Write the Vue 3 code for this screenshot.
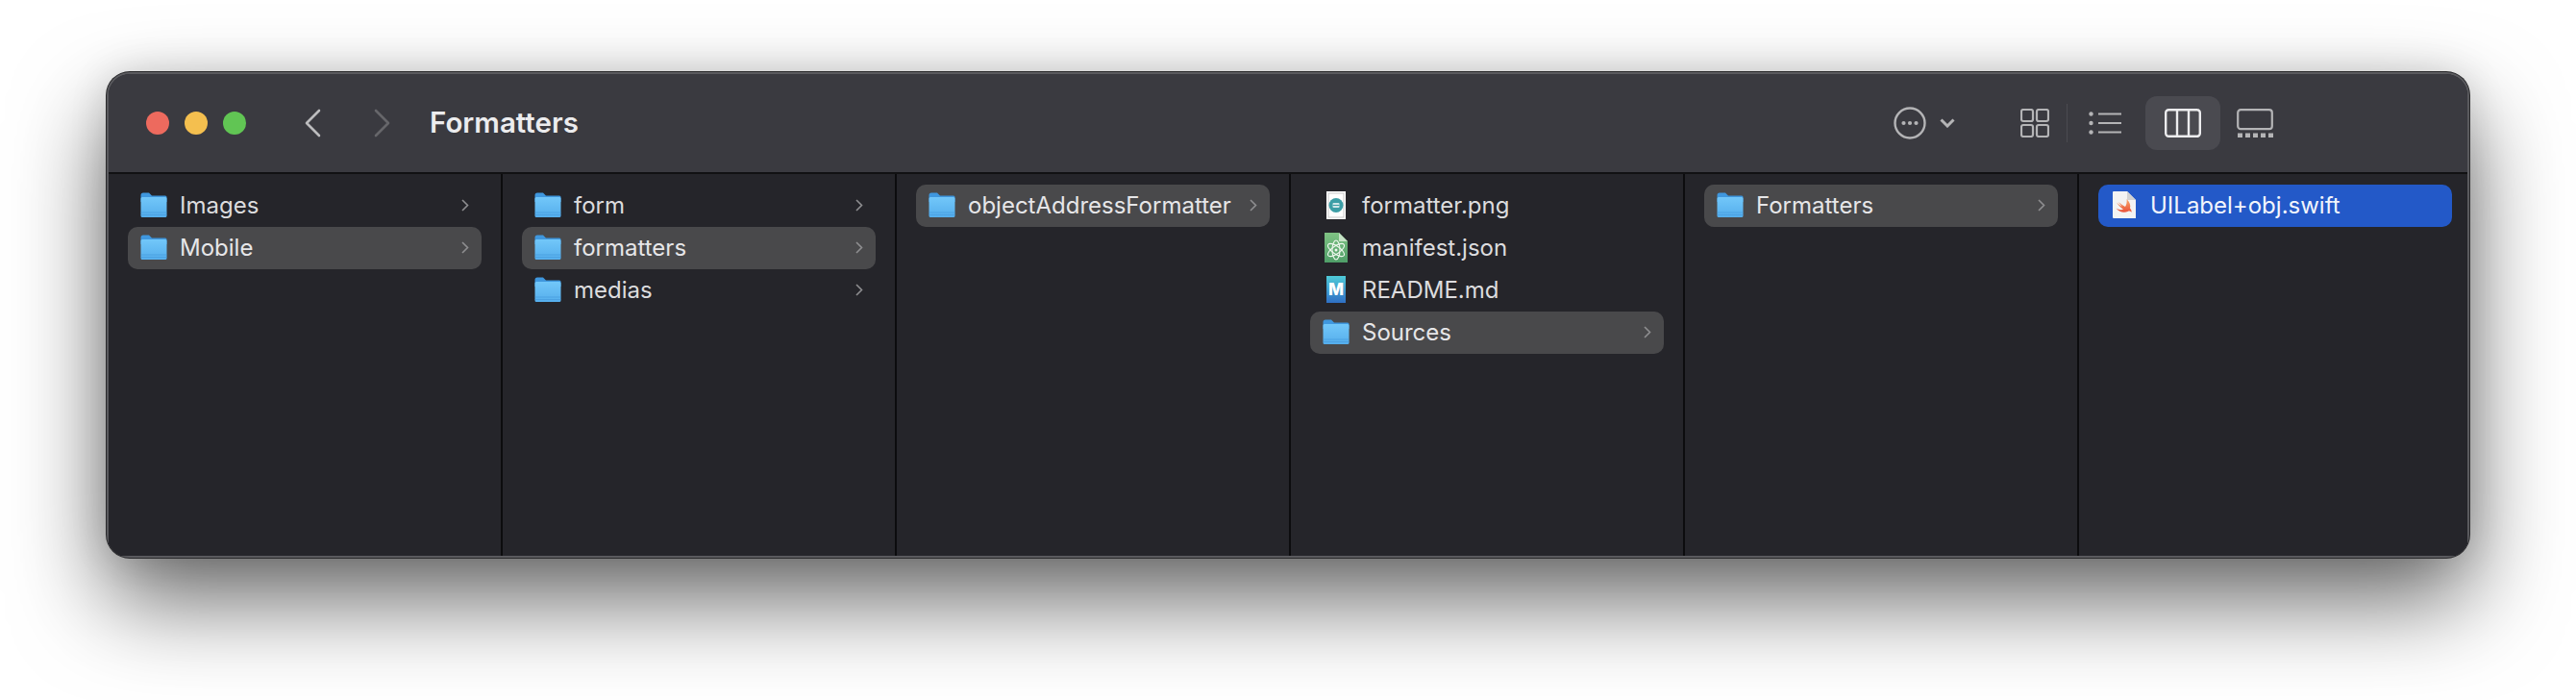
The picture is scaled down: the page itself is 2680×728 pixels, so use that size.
<script setup>
// Finder column view: each column lists its rows, row.kind picks the icon
const columns = [
  [
    { name: 'Images', kind: 'folder', arrow: true },
    { name: 'Mobile', kind: 'folder', arrow: true, state: 'open' }
  ],
  [
    { name: 'form', kind: 'folder', arrow: true },
    { name: 'formatters', kind: 'folder', arrow: true, state: 'open' },
    { name: 'medias', kind: 'folder', arrow: true }
  ],
  [{ name: 'objectAddressFormatter', kind: 'folder', arrow: true, state: 'open' }],
  [
    { name: 'formatter.png', kind: 'png' },
    { name: 'manifest.json', kind: 'json' },
    { name: 'README.md', kind: 'md' },
    { name: 'Sources', kind: 'folder', arrow: true, state: 'open' }
  ],
  [{ name: 'Formatters', kind: 'folder', arrow: true, state: 'open' }],
  [{ name: 'UILabel+obj.swift', kind: 'swift', state: 'picked' }]
]
</script>

<template>
  <div class="page">
    <div class="window">
      <header class="toolbar">
        <div class="lights">
          <span class="light red"></span>
          <span class="light yellow"></span>
          <span class="light green"></span>
        </div>
        <div class="nav">
          <svg width="18" height="30" viewBox="0 0 18 30" class="back">
            <path d="M16 2 3 15l13 13" />
          </svg>
          <svg width="18" height="30" viewBox="0 0 18 30" class="forward">
            <path d="M2 2l13 13L2 28" />
          </svg>
        </div>
        <h1 class="title">Formatters</h1>

        <div class="more">
          <svg width="34" height="34" viewBox="0 0 34 34" class="tool-icon">
            <circle cx="17" cy="17" r="15.5" />
            <circle cx="10.5" cy="17" r="2.1" class="dot" />
            <circle cx="17" cy="17" r="2.1" class="dot" />
            <circle cx="23.5" cy="17" r="2.1" class="dot" />
          </svg>
          <svg width="16" height="10" viewBox="0 0 16 10" class="tool-icon chevron">
            <path d="M1.5 1.5 8 8l6.5-6.5" />
          </svg>
        </div>

        <div class="views">
          <button class="view grid-view">
            <svg width="30" height="30" viewBox="0 0 30 30" class="tool-icon thin">
              <rect x="1" y="1" width="12" height="12" rx="2" />
              <rect x="17" y="1" width="12" height="12" rx="2" />
              <rect x="1" y="17" width="12" height="12" rx="2" />
              <rect x="17" y="17" width="12" height="12" rx="2" />
            </svg>
          </button>
          <span class="view-sep"></span>
          <button class="view list-view">
            <svg width="34" height="24" viewBox="0 0 34 24" class="tool-icon thin">
              <circle cx="2.5" cy="2.5" r="2.2" class="dot" />
              <circle cx="2.5" cy="12" r="2.2" class="dot" />
              <circle cx="2.5" cy="21.5" r="2.2" class="dot" />
              <path d="M10 2.5h24M10 12h24M10 21.5h24" />
            </svg>
          </button>
          <button class="view column-view">
            <svg width="38" height="30" viewBox="0 0 38 30" class="tool-icon active">
              <rect x="1.2" y="1.2" width="35.6" height="27.6" rx="3" />
              <path d="M13 1.2v27.6M25 1.2v27.6" />
            </svg>
          </button>
          <button class="view gallery-view">
            <svg width="38" height="30" viewBox="0 0 38 30" class="tool-icon thin">
              <rect x="1.2" y="1.2" width="35.6" height="20" rx="3" />
              <path d="M1 28h5M9 28h5M17 28h5M25 28h5M33 28h5" class="film" />
            </svg>
          </button>
        </div>
      </header>

      <main class="browser">
        <section v-for="(rows, c) in columns" :key="c" class="column">
          <div v-for="row in rows" :key="row.name" class="row" :class="row.state">
            <span class="row-icon">
              <svg v-if="row.kind === 'folder'" width="28" height="26" viewBox="0 0 28 26">
                <path d="M.5 3A2.5 2.5 0 0 1 3 .5h6l3 3h14A1.5 1.5 0 0 1 27.5 5v5H.5z" fill="#3f97de" />
                <path d="M.5 6.5A1.5 1.5 0 0 1 2 5h24a1.5 1.5 0 0 1 1.5 1.5v18A1.5 1.5 0 0 1 26 26H2a1.5 1.5 0 0 1-1.5-1.5z" fill="url(#folderFill)" />
                <path d="M.5 21h27M.5 23.5h27" stroke="#3f92d8" stroke-width="1" opacity=".5" />
                <defs>
                  <linearGradient id="folderFill" x1="0" y1="0" x2="0" y2="1">
                    <stop offset="0" stop-color="#72c7f9" />
                    <stop offset="1" stop-color="#55aeec" />
                  </linearGradient>
                </defs>
              </svg>

              <svg v-else-if="row.kind === 'png'" width="20" height="29" viewBox="0 0 20 29">
                <rect width="20" height="29" fill="#fff" />
                <rect x="2" y="2" width="16" height="25" fill="none" stroke="#c9c9c9" />
                <circle cx="10" cy="14.5" r="7.5" fill="#3c9ea6" />
                <rect x="6.5" y="12" width="7" height="5" rx="1" fill="#cfe6e8" />
                <path d="M6.5 14.5h7" stroke="#3c9ea6" />
              </svg>

              <svg v-else-if="row.kind === 'json'" width="24" height="31" viewBox="0 0 24 31">
                <path d="M0 0h15l9 9v22H0z" fill="url(#jsonFill)" />
                <path d="M15 0l9 9h-9z" fill="#c6e3c6" />
                <g fill="none" stroke="#eef7ee" stroke-width="1.1">
                  <ellipse cx="12" cy="18" rx="10" ry="4" transform="rotate(35 12 18)" />
                  <ellipse cx="12" cy="18" rx="10" ry="4" transform="rotate(-35 12 18)" />
                  <ellipse cx="12" cy="18" rx="10" ry="4" transform="rotate(90 12 18)" />
                </g>
                <circle cx="12" cy="18" r="1.5" fill="#eef7ee" />
                <defs>
                  <linearGradient id="jsonFill" x1="0" y1="0" x2="0" y2="1">
                    <stop offset="0" stop-color="#7fc283" />
                    <stop offset="1" stop-color="#4f9e68" />
                  </linearGradient>
                </defs>
              </svg>

              <span v-else-if="row.kind === 'md'" class="md-icon">M</span>

              <svg v-else-if="row.kind === 'swift'" width="24" height="28" viewBox="0 0 24 28">
                <path d="M1 0h14l9 9v19H1a1 1 0 0 1-1-1V1a1 1 0 0 1 1-1z" fill="#f3f3f3" />
                <path d="M15 0l9 9h-9z" fill="#d2d2d2" />
                <path d="M14.5 8C17.5 11 19 14.5 18 17.5 19.4 19 19.8 20.6 19.5 21.8 18.4 20.4 16.8 20.4 15.6 21 12 22.6 7 22 3.5 17.5 6 19.2 9 19.6 11 18.8 8 16.6 5.5 13.8 4 11.5 6 13.3 8 14.8 9.7 15.8 8.3 14.2 7 12.5 6 11 8.5 13.2 11 15 13 16 14.5 13.6 15 10.8 14.5 8z" fill="url(#swiftFill)" />
                <defs>
                  <linearGradient id="swiftFill" x1="0" y1="0" x2="0" y2="1">
                    <stop offset="0" stop-color="#f8ab6c" />
                    <stop offset="1" stop-color="#ea5038" />
                  </linearGradient>
                </defs>
              </svg>
            </span>
            <span class="row-name">{{ row.name }}</span>
            <svg v-if="row.arrow" width="8" height="13" viewBox="0 0 8 13" class="arrow">
              <path d="M1 1l5.5 5.5L1 12" />
            </svg>
          </div>
        </section>
      </main>
    </div>
  </div>
</template>

<style scoped>
.page {
  width: 2680px;
  height: 728px;
  padding: 75px 111px 0 111px;
  box-sizing: border-box;
  background: #fff;
  overflow: hidden;
  font-family: Inter, "Liberation Sans", sans-serif;
}

.window {
  height: 505px;
  display: flex;
  flex-direction: column;
  border-radius: 24px;
  overflow: hidden;
  background: #25252a;
  box-shadow:
    0 0 0 1px #2a2a2c,
    inset 0 0 0 2px #5a5a5e,
    0 44px 96px rgba(0, 0, 0, 0.6),
    0 0 40px rgba(0, 0, 0, 0.12);
}

.toolbar {
  height: 104px;
  box-sizing: border-box;
  flex: none;
  display: flex;
  align-items: center;
  padding: 0 0 0 39px;
  background: #3a3a40;
  border-bottom: 2px solid #111113;
  margin: 2px 2px 0;
  border-radius: 22px 22px 0 0;
}

.lights {
  display: flex;
  gap: 16px;
}

.light {
  width: 24px;
  height: 24px;
  border-radius: 50%;
}

.red { background: #ed6a5e; }
.yellow { background: #f4bf4f; }
.green { background: #61c554; }

.nav {
  display: flex;
  gap: 55px;
  margin-left: 60px;
}

.nav svg path {
  fill: none;
  stroke-width: 2.6;
  stroke-linecap: round;
  stroke-linejoin: round;
}

.back path { stroke: #bcbcbe; }
.forward path { stroke: #66666a; }

.title {
  margin: 0 0 2px 40px;
  font-size: 29.5px;
  font-weight: 600;
  color: #ececee;
}

.more {
  margin-left: auto;
  display: flex;
  align-items: center;
  gap: 14px;
}

.tool-icon {
  display: block;
  fill: none;
  stroke: #b4b4b6;
  stroke-width: 2.4;
}

.tool-icon.thin { stroke-width: 2.2; }
.tool-icon.active { stroke: #ececee; stroke-width: 2.4; }
.tool-icon .dot { fill: #b4b4b6; stroke: none; }
.tool-icon .film { stroke-width: 5; }
.chevron { stroke-width: 3; }

.views {
  display: flex;
  align-items: center;
  margin-left: 68px;
  margin-right: 202px;
}

.view {
  padding: 0;
  border: 0;
  background: none;
  display: flex;
  align-items: center;
  justify-content: center;
  height: 56px;
  border-radius: 12px;
}

.grid-view { width: 30px; }

.view-sep {
  width: 1px;
  height: 40px;
  margin: 0 22px 0 18px;
  background: #4b4b50;
}

.list-view { width: 34px; margin-right: 25px; }
.column-view { width: 78px; background: #4a4a50; margin-right: 17px; }
.gallery-view { width: 38px; }

.browser {
  flex: 1;
  display: flex;
  margin: 0 2px 2px;
  background: #25252a;
}

.column {
  width: 410px;
  flex: none;
  box-sizing: border-box;
  padding: 11px 20px 0 20px;
  border-right: 2px solid #0c0c0e;
}

.column:last-child {
  flex: 1;
  width: auto;
  border-right: 0;
  padding-right: 16px;
}

.row {
  height: 44px;
  box-sizing: border-box;
  display: flex;
  align-items: center;
  padding: 0 13px 2px 13px;
  border-radius: 10px;
  color: #dcdcde;
  font-size: 24px;
}

.row.open {
  background: #49494b;
  color: #e6e6e8;
}

.row.picked {
  background: #2359c8;
  color: #f2f5fc;
}

.row-icon {
  width: 28px;
  height: 32px;
  flex: none;
  display: flex;
  align-items: center;
  justify-content: center;
}

.row-name {
  margin-left: 13px;
  white-space: nowrap;
}

.arrow {
  margin-left: auto;
  fill: none;
  stroke: #8e8e90;
  stroke-width: 1.6;
}

.md-icon {
  width: 20px;
  height: 28px;
  display: flex;
  align-items: center;
  justify-content: center;
  background: linear-gradient(#4fcbd8, #2f6fc4);
  color: #fff;
  font-size: 17px;
  font-weight: 800;
}
</style>

<style>
body {
  background: #fff;
}
</style>
